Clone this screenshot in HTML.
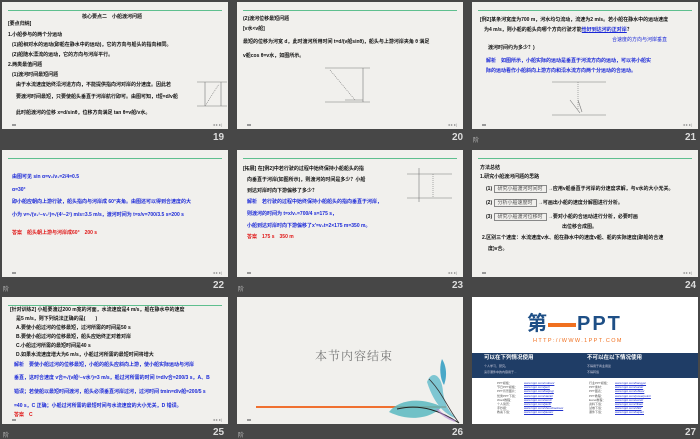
<!DOCTYPE html>
<html><head><meta charset="utf-8"><style>
*{margin:0;padding:0;box-sizing:border-box}
body{width:700px;height:438px;background:#474747;position:relative;overflow:hidden;font-family:"Liberation Sans","Noto Sans CJK SC",sans-serif}
.s{position:absolute;width:226px;height:127px;background:#f1f0ed;overflow:hidden}
.g{position:absolute;left:6px;right:6px;top:8px;height:1px;background:#5fbf8f}
.n{position:absolute;color:#ddd;font-size:10px;font-weight:bold}
.j{position:absolute;color:#bbb;font-size:6px}
.t{position:absolute;font-size:5px;line-height:6px;white-space:nowrap;font-weight:bold;color:#111}
.b{color:#1a28d8}.r{color:#e01818}
.ft{position:absolute;bottom:3px;left:10px;width:4px;height:2px;background:#999}
.ar{position:absolute;bottom:2px;right:6px;font-size:4px;color:#888}
.bx{display:inline-block;border:1px solid #888;padding:0 3px;font-weight:normal;color:#555}
</style></head><body>

<div class="s" style="left:2px;top:2px"><div class="g"></div>
<div class="t" style="left:80px;top:12px">核心要点二　小船渡河问题</div>
<div class="t" style="left:6px;top:19px">[要点归纳]</div>
<div class="t" style="left:6px;top:30px">1.小船参与的两个分运动</div>
<div class="t" style="left:10px;top:40px">(1)船相对水的运动(即船在静水中的运动)，它的方向与船头的指向相同。</div>
<div class="t" style="left:10px;top:50px">(2)船随水漂流的运动，它的方向与河岸平行。</div>
<div class="t" style="left:6px;top:60px">2.两类最值问题</div>
<div class="t" style="left:10px;top:70px">(1)渡河时间最短问题</div>
<div class="t" style="left:14px;top:80px">由于水流速度始终沿河道方向，不能提供指向河对岸的分速度。因此若</div>
<div class="t" style="left:14px;top:92px">要渡河时间最短，只要使船头垂直于河岸航行即可。由图可知，t短=d/v船</div>
<div class="t" style="left:14px;top:108px">此时船渡河的位移 x=d/sinθ，位移方向满足 tan θ=v船/v水。</div>
<svg style="position:absolute;left:195px;top:78px" width="30" height="28"><g stroke="#777" fill="none" stroke-width=".6"><line x1="0" y1="2" x2="30" y2="2"/><line x1="0" y1="26" x2="30" y2="26"/><line x1="8" y1="26" x2="22" y2="4" stroke-dasharray="1,1"/><line x1="8" y1="2" x2="8" y2="26"/><line x1="24" y1="2" x2="24" y2="26"/></g></svg>
<div class="ft"></div><div class="ar">◂ ▸ ▸|</div></div>

<div class="s" style="left:237px;top:2px"><div class="g"></div>
<div class="t" style="left:6px;top:14px">(2)渡河位移最短问题</div>
<div class="t" style="left:6px;top:24px">[v水&lt;v船]</div>
<div class="t" style="left:6px;top:37px">最短的位移为河宽 d，此时渡河所用时间 t=d/(v船sinθ)，船头与上游河岸夹角 θ 满足</div>
<div class="t" style="left:6px;top:51px">v船cos θ=v水，如图所示。</div>
<svg style="position:absolute;left:88px;top:62px" width="45" height="42"><g stroke="#777" fill="none" stroke-width=".6"><line x1="0" y1="4" x2="45" y2="4"/><line x1="0" y1="38" x2="45" y2="38"/><line x1="5" y1="6" x2="30" y2="36" stroke-dasharray="1,1"/><line x1="38" y1="4" x2="38" y2="38"/><line x1="20" y1="36" x2="38" y2="36"/></g></svg>
<div class="ft"></div><div class="ar">◂ ▸ ▸|</div></div>

<div class="s" style="left:472px;top:2px"><div class="g"></div>
<div class="t" style="left:8px;top:15px">[例2]某条河宽度为700 m，河水均匀流动，流速为2 m/s。若小船在静水中的运动速度</div>
<div class="t" style="left:12px;top:25px">为4 m/s，则小船的船头向哪个方向行驶才能<span class="b" style="text-decoration:underline">恰好到达河的正对岸</span>？</div>
<div class="t b" style="left:140px;top:35px;font-weight:normal">合速度的方向与河岸垂直</div>
<div class="t" style="left:16px;top:43px">渡河时间约为多少？)</div>
<div class="t b" style="left:14px;top:56px">解析　如图所示，小船实际的运动是垂直于河流方向的运动，可以将小船实</div>
<div class="t b" style="left:14px;top:66px">际的运动看作小船斜向上游方向和沿水流方向两个分运动的合运动。</div>
<svg style="position:absolute;left:80px;top:78px" width="54" height="36"><g stroke="#777" fill="none" stroke-width=".6"><line x1="0" y1="2" x2="54" y2="2"/><line x1="0" y1="35" x2="54" y2="35"/><line x1="26" y1="2" x2="26" y2="30" stroke-dasharray="1,1"/><line x1="18" y1="20" x2="28" y2="33"/><line x1="26" y1="20" x2="30" y2="32"/></g></svg>
<div class="ft"></div><div class="ar">◂ ▸ ▸|</div></div>

<div class="n" style="left:213px;top:132px">19</div>
<div class="n" style="left:452px;top:132px">20</div>
<div class="j" style="left:473px;top:135px">阶</div>
<div class="n" style="left:685px;top:132px">21</div>

<div class="s" style="left:2px;top:150px"><div class="g"></div>
<div class="t b" style="left:10px;top:24px">由图可见 sin α=v₂/v₁=2/4=0.5</div>
<div class="t b" style="left:10px;top:37px">α=30°</div>
<div class="t b" style="left:10px;top:49px">即小船应朝向上游行驶，船头指向与河岸成 60°夹角。由图还可以得到合速度的大</div>
<div class="t b" style="left:10px;top:62px">小为 v=√(v₁²−v₂²)=√(4²−2²) m/s≈3.5 m/s，渡河时间为 t=x/v=700/3.5 s=200 s</div>
<div class="t r" style="left:10px;top:80px">答案　船头朝上游与河岸成60°　200 s</div>
<div class="ft"></div><div class="ar">◂ ▸ ▸|</div></div>

<div class="s" style="left:237px;top:150px"><div class="g"></div>
<div class="t" style="left:6px;top:16px">[拓展] 在[例2]中若行驶的过程中始终保持小船船头的指</div>
<div class="t" style="left:10px;top:27px">向垂直于河岸(如图所示)，则渡河的时间是多少？小船</div>
<div class="t" style="left:10px;top:38px">到达对岸时向下游偏移了多少？</div>
<div class="t b" style="left:10px;top:49px">解析　若行驶的过程中始终保持小船船头的指向垂直于河岸，</div>
<div class="t b" style="left:10px;top:61px">则渡河的时间为 t=x/v₁=700/4 s=175 s，</div>
<div class="t b" style="left:10px;top:73px">小船到达对岸时向下游偏移了x'=v₂t=2×175 m=350 m。</div>
<div class="t r" style="left:10px;top:84px">答案　175 s　350 m</div>
<svg style="position:absolute;left:170px;top:18px" width="45" height="34"><g stroke="#777" fill="none" stroke-width=".6"><line x1="0" y1="6" x2="45" y2="6"/><line x1="0" y1="30" x2="45" y2="30"/><line x1="12" y1="0" x2="12" y2="34"/><line x1="26" y1="6" x2="26" y2="30" stroke-dasharray="1,1"/></g></svg>
<div class="ft"></div><div class="ar">◂ ▸ ▸|</div></div>

<div class="s" style="left:472px;top:150px"><div class="g"></div>
<div class="t" style="left:8px;top:15px">方法总结</div>
<div class="t" style="left:8px;top:24px">1.研究小船渡河问题的思路</div>
<div class="t" style="left:14px;top:35px">(1) <span class="bx">研究小船渡河时间时</span> →应用v船垂直于河岸的分速度求解，与v水的大小无关。</div>
<div class="t" style="left:14px;top:49px">(2) <span class="bx">分析小船速度时</span> →可画出小船的速度分解图进行分析。</div>
<div class="t" style="left:14px;top:63px">(3) <span class="bx">研究小船渡河位移时</span> →要对小船的合运动进行分析，必要时画</div>
<div class="t" style="left:90px;top:74px">出位移合成图。</div>
<div class="t" style="left:10px;top:85px">2.区别三个速度：水流速度v水、船在静水中的速度v船、船的实际速度(即船的合速</div>
<div class="t" style="left:16px;top:96px">度)v合。</div>
<div class="ft"></div><div class="ar">◂ ▸ ▸|</div></div>

<div class="j" style="left:3px;top:284px">阶</div>
<div class="n" style="left:213px;top:280px">22</div>
<div class="j" style="left:238px;top:284px">阶</div>
<div class="n" style="left:452px;top:280px">23</div>
<div class="n" style="left:685px;top:280px">24</div>

<div class="s" style="left:2px;top:297px"><div class="g" style="top:8px"></div>
<div class="t" style="left:8px;top:10px">[针对训练2] 小船要渡过200 m宽的河面，水流速度是4 m/s，船在静水中的速度</div>
<div class="t" style="left:14px;top:19px">是5 m/s，则下列说法正确的是(　　)</div>
<div class="t" style="left:14px;top:28px">A.要使小船过河的位移最短，过河所需的时间是50 s</div>
<div class="t" style="left:14px;top:37px">B.要使小船过河的位移最短，船头应始终正对着对岸</div>
<div class="t" style="left:14px;top:46px">C.小船过河所需的最短时间是40 s</div>
<div class="t" style="left:14px;top:55px">D.如果水流速度增大为6 m/s，小船过河所需的最短时间将增大</div>
<div class="t b" style="left:12px;top:65px">解析　要使小船过河的位移最短，小船的船头应斜向上游，使小船实际运动与河岸</div>
<div class="t b" style="left:12px;top:78px">垂直，这时合速度 v合=√(v船²−v水²)=3 m/s，船过河所需的时间 t=d/v合=200/3 s，A、B</div>
<div class="t b" style="left:12px;top:92px">错误；若使船以最短时间渡河，船头必须垂直河岸过河，过河时间 tmin=d/v船=200/5 s</div>
<div class="t b" style="left:12px;top:106px">=40 s，C 正确；小船过河所需的最短时间与水流速度的大小无关，D 错误。</div>
<div class="t r" style="left:12px;top:115px">答案　C</div>
<div class="ft"></div><div class="ar">◂ ▸ ▸|</div></div>

<div class="s" style="left:237px;top:297px">
<div style="position:absolute;left:78px;top:50px;font-size:12px;color:#777;font-family:'Liberation Serif','Noto Serif CJK SC',serif;letter-spacing:1px">本节内容结束</div>
<div style="position:absolute;left:19px;top:109px;width:190px;height:1.5px;background:#f07030"></div>
<svg style="position:absolute;left:150px;top:60px" width="76" height="67"><path d="M2 55 C12 42 35 40 55 50 C45 60 25 66 2 55Z" fill="#5bb8c0" opacity=".85"/><path d="M40 25 C45 12 55 18 56 35 C58 48 62 55 70 62 C60 58 48 50 40 25Z" fill="#62bccb" opacity=".8"/><path d="M55 2 C60 10 60 20 57 28 C53 22 52 10 55 2Z" fill="#4aa8c8"/><path d="M10 52 C35 46 55 55 72 66" stroke="#222" fill="none" stroke-width="1"/><path d="M42 22 C55 35 60 50 72 66" stroke="#333" fill="none" stroke-width=".8"/><path d="M50 52 C55 58 62 62 68 64" stroke="#b080d0" fill="none" stroke-width="2" opacity=".6"/></svg>
<div class="ft"></div></div>

<div class="s" style="left:472px;top:297px;background:#fff">
<div style="position:absolute;left:55px;top:17px;font-size:20px;line-height:20px;font-weight:bold;color:#1e4f86;white-space:nowrap">第<span style="display:inline-block;width:28px;height:4px;background:#f07020;vertical-align:middle;margin:0 1px"></span><span style="letter-spacing:2px">PPT</span></div>
<div style="position:absolute;left:61px;top:41px;font-size:5.5px;color:#f07020;letter-spacing:1.4px;white-space:nowrap">HTTP://WWW.1PPT.COM</div>
<div style="position:absolute;left:0;top:56px;width:226px;height:25px;background:#1f3d66"></div>
<div class="t" style="left:12px;top:58px;color:#fff;font-size:5.5px">可以在下列情况使用</div>
<div class="t" style="left:115px;top:58px;color:#fff;font-size:5.5px">不可以在以下情况使用</div>
<div class="t" style="left:12px;top:66px;color:#ccd;font-size:3px;font-weight:normal">个人学习、研究。<br>演示课件中的内容用于...</div>
<div class="t" style="left:115px;top:66px;color:#ccd;font-size:3px;font-weight:normal">不得用于商业用途<br>不得转载</div>
<div class="t" style="left:25px;top:84px;color:#555;font-size:3px;line-height:4.2px;font-weight:normal">PPT模板：<br>节日PPT模板：<br>PPT背景图片：<br>优秀PPT下载：<br>Word教程：<br>个人简历：<br>手抄报：<br>教案下载：</div>
<div class="t" style="left:52px;top:84px;color:#2233cc;font-size:3px;line-height:4.2px;text-decoration:underline;font-weight:normal">www.1ppt.com/moban/<br>www.1ppt.com/jieri/<br>www.1ppt.com/beijing/<br>www.1ppt.com/xiazai/<br>www.1ppt.com/word/<br>www.1ppt.com/jianli/<br>www.1ppt.com/shouchaobao/<br>www.1ppt.com/jiaoan/</div>
<div class="t" style="left:117px;top:84px;color:#555;font-size:3px;line-height:4.2px;font-weight:normal">行业PPT模板：<br>PPT素材：<br>PPT图表：<br>PPT教程：<br>Excel教程：<br>资料下载：<br>试卷下载：<br>课件下载：</div>
<div class="t" style="left:143px;top:84px;color:#2233cc;font-size:3px;line-height:4.2px;text-decoration:underline;font-weight:normal">www.1ppt.com/hangye/<br>www.1ppt.com/sucai/<br>www.1ppt.com/tubiao/<br>www.1ppt.com/powerpoint/<br>www.1ppt.com/excel/<br>www.1ppt.com/ziliao/<br>www.1ppt.com/shiti/<br>www.1ppt.com/kejian/</div>
</div>

<div class="j" style="left:3px;top:430px">阶</div>
<div class="n" style="left:213px;top:427px">25</div>
<div class="j" style="left:238px;top:430px">阶</div>
<div class="n" style="left:452px;top:427px">26</div>
<div class="n" style="left:685px;top:427px">27</div>
</body></html>
